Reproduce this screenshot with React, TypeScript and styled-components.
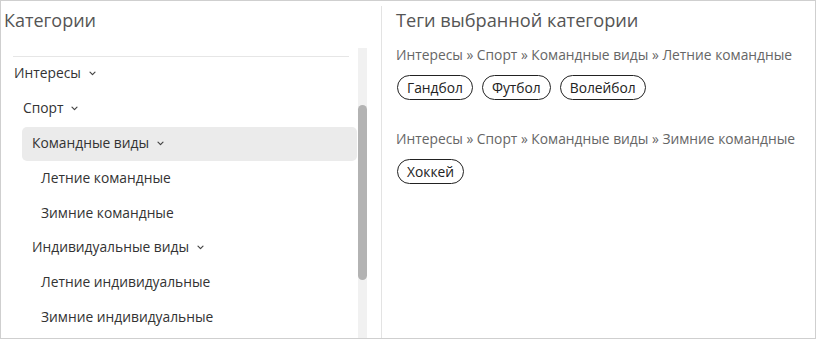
import { FC, useLayoutEffect, useRef, useState } from "react";
import styled, { createGlobalStyle } from "styled-components";

type TreeNode = {
  label: string;
  level: number;
  hasChildren?: boolean;
  active?: boolean;
};

type TagGroup = {
  path: string[];
  tags: string[];
};

const tree: TreeNode[] = [
  { label: "Интересы", level: 0, hasChildren: true },
  { label: "Спорт", level: 1, hasChildren: true },
  { label: "Командные виды", level: 2, hasChildren: true, active: true },
  { label: "Летние командные", level: 3 },
  { label: "Зимние командные", level: 3 },
  { label: "Индивидуальные виды", level: 2, hasChildren: true },
  { label: "Летние индивидуальные", level: 3 },
  { label: "Зимние индивидуальные", level: 3 },
];

const groups: TagGroup[] = [
  {
    path: ["Интересы", "Спорт", "Командные виды", "Летние командные"],
    tags: ["Гандбол", "Футбол", "Волейбол"],
  },
  {
    path: ["Интересы", "Спорт", "Командные виды", "Зимние командные"],
    tags: ["Хоккей"],
  },
];

const Chevron: FC = () => (
  <svg width="7" height="5" viewBox="0 0 7 5" fill="none">
    <path
      d="M1 1.2l2.5 2.5 2.5-2.5"
      stroke="#444"
      strokeWidth="1.2"
      strokeLinecap="round"
      strokeLinejoin="round"
    />
  </svg>
);

const App: FC = () => {
  const scrollRef = useRef<HTMLDivElement>(null);
  const [thumb, setThumb] = useState({ top: 0, height: 0 });

  useLayoutEffect(() => {
    const el = scrollRef.current;
    if (!el) return;
    el.scrollTop = 94;
    const ratio = el.clientHeight / el.scrollHeight;
    setThumb({
      top: el.scrollTop * ratio,
      height: el.clientHeight * ratio,
    });
  }, []);

  return (
    <>
      <GlobalStyle />
      <Frame>
        <LeftPanel>
          <PanelTitle>Категории</PanelTitle>
          <TreeBox>
            <TreeScroll ref={scrollRef}>
              <SearchBox placeholder="Поиск категории" />
              <TreeDivider />
              <TreeList>
                {tree.map((node) => (
                  <TreeRow
                    key={node.label}
                    $level={node.level}
                    $active={node.active}
                  >
                    {node.label}
                    {node.hasChildren && <Chevron />}
                  </TreeRow>
                ))}
              </TreeList>
            </TreeScroll>
            <ScrollTrack>
              <ScrollThumb
                style={{ top: thumb.top, height: thumb.height }}
              />
            </ScrollTrack>
          </TreeBox>
        </LeftPanel>
        <RightPanel>
          <RightTitle>Теги выбранной категории</RightTitle>
          {groups.map((group) => (
            <Group key={group.path.join("/")}>
              <Breadcrumb>{group.path.join(" » ")}</Breadcrumb>
              <TagRow>
                {group.tags.map((tag) => (
                  <Tag key={tag}>{tag}</Tag>
                ))}
              </TagRow>
            </Group>
          ))}
        </RightPanel>
      </Frame>
    </>
  );
};

export default App;

const GlobalStyle = createGlobalStyle`
  html, body {
    margin: 0;
    padding: 0;
    background: #fff;
  }
  body {
    font-family: "Open Sans", "Liberation Sans", sans-serif;
  }
  * {
    box-sizing: border-box;
  }
`;

const Frame = styled.div`
  width: 816px;
  height: 339px;
  border: 1px solid #cfcfcf;
  display: grid;
  grid-template-columns: 380px 1fr;
  overflow: hidden;
  background: #fff;
`;

const LeftPanel = styled.section`
  display: flex;
  flex-direction: column;
  padding: 7px 14px 0 3px;
  min-height: 0;
`;

const PanelTitle = styled.h2`
  margin: 0;
  font-size: 18px;
  line-height: 24px;
  font-weight: 400;
  color: #555;
`;

const TreeBox = styled.div`
  margin-top: 16px;
  flex: 1;
  min-height: 0;
  display: flex;
`;

const TreeScroll = styled.div`
  flex: 1;
  min-width: 0;
  overflow: hidden;
`;

const ScrollTrack = styled.div`
  position: relative;
  width: 9px;
  flex-shrink: 0;
  background: #f1f1f1;
`;

const ScrollThumb = styled.div`
  position: absolute;
  left: 0;
  right: 0;
  background: #b3b3b3;
  border-radius: 5px;
`;

const SearchBox = styled.input`
  display: block;
  width: calc(100% - 18px);
  height: 32px;
  margin: 51px 9px 19px;
  padding: 0 10px;
  border: 1px solid #ddd;
  border-radius: 4px;
  font: inherit;
  font-size: 14px;
  color: #333;
`;

const TreeDivider = styled.hr`
  margin: 0 9px;
  border: 0;
  border-top: 1px solid #e6e6e6;
`;

const TreeList = styled.ul`
  list-style: none;
  margin: 0;
  padding: 0 1px 98px 0;
`;

const TreeRow = styled.li<{ $level: number; $active?: boolean }>`
  display: flex;
  align-items: center;
  gap: 8px;
  height: 34.8px;
  margin-left: ${({ $level }) => $level * 9}px;
  padding: 0 10px 3px;
  border-radius: 5px;
  font-size: 13.8px;
  color: #333;
  background: ${({ $active }) => ($active ? "#ebebeb" : "transparent")};
  white-space: nowrap;

  svg {
    margin-top: 2px;
  }
`;

const RightPanel = styled.section`
  margin-top: 5px;
  border-left: 1px solid #e3e3e3;
  padding: 2px 14px 0 14px;
`;

const RightTitle = styled.h2`
  margin: 0 0 13px;
  font-size: 18.2px;
  line-height: 24px;
  font-weight: 400;
  color: #555;
`;

const Group = styled.div`
  display: flex;
  flex-direction: column;
  gap: 10px;
  margin-bottom: 29px;
`;

const Breadcrumb = styled.div`
  font-size: 13.8px;
  line-height: 20px;
  color: #666;
  white-space: nowrap;
`;

const TagRow = styled.div`
  display: flex;
  gap: 9px;
  padding-left: 1px;
`;

const Tag = styled.span`
  display: inline-flex;
  align-items: center;
  height: 25px;
  padding: 0 9px 1px;
  border: 1px solid #222;
  border-radius: 13px;
  font-size: 13.8px;
  color: #222;
`;
